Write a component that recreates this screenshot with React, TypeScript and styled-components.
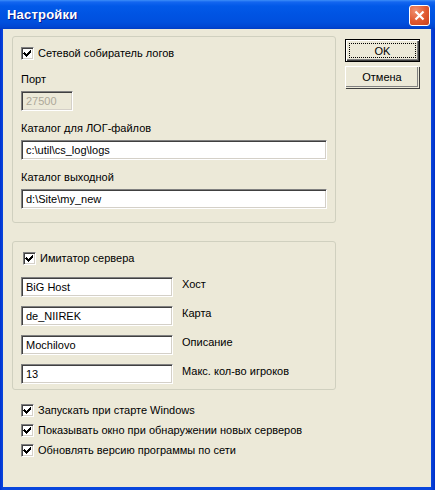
import React from "react";
import styled, { createGlobalStyle } from "styled-components";

const GlobalStyle = createGlobalStyle`
  html, body {
    margin: 0;
    padding: 0;
    background: #fff;
  }
  * {
    box-sizing: border-box;
  }
`;

const Window = styled.div`
  width: 435px;
  height: 490px;
  display: flex;
  flex-direction: column;
  background: linear-gradient(90deg, #0032d0 0, #0846dd 3px, #0846dd 431px, #0030c8 435px);
  font-family: "Liberation Sans", Arial, sans-serif;
  font-size: 11px;
  color: #000;
`;

const TitleBar = styled.div`
  height: 29px;
  flex: none;
  display: flex;
  align-items: center;
  justify-content: space-between;
  padding: 0 5px 0 7px;
  background: linear-gradient(
    180deg,
    #3d8ef8 0,
    #1466f0 2px,
    #0259e8 6px,
    #0054e3 14px,
    #0050de 22px,
    #0046d2 27px,
    #003cc4 29px
  );
`;

const Title = styled.span`
  color: #fff;
  font-weight: bold;
  font-size: 13px;
  letter-spacing: 0.2px;
  text-shadow: 1px 1px 0 #0a1c8c;
`;

const CloseButton = styled.div`
  width: 21px;
  height: 21px;
  border: 1px solid #fff;
  border-radius: 3px;
  background: radial-gradient(circle at 30% 25%, #f09070 0, #e0582f 55%, #c8401c 100%);
  display: flex;
  align-items: center;
  justify-content: center;
  margin-top: 1px;
`;

const Client = styled.div`
  flex: 1;
  margin: 0 4px 3px 3px;
  background: #ece9d8;
  display: flex;
  gap: 9px;
  padding: 7px 0 0 9px;
`;

const LeftColumn = styled.div`
  width: 324px;
  display: flex;
  flex-direction: column;
`;

const GroupBox = styled.div<{ $pad: string; $mt?: number }>`
  border: 1px solid #d0d0bf;
  border-radius: 3px;
  padding: ${(p) => p.$pad};
  margin-top: ${(p) => p.$mt ?? 0}px;
  display: flex;
  flex-direction: column;
`;

const CheckRow = styled.label<{ $mt?: number; $indent?: number }>`
  display: flex;
  align-items: center;
  gap: 4px;
  height: 13px;
  line-height: 13px;
  white-space: nowrap;
  margin-top: ${(p) => p.$mt ?? 0}px;
  padding-left: ${(p) => p.$indent ?? 0}px;
`;

const Box = styled.span`
  width: 13px;
  height: 13px;
  flex: none;
  background: #fff;
  border-style: solid;
  border-width: 1px;
  border-color: #808080 #fff #fff #808080;
  box-shadow: inset 1px 1px 0 #404040, inset -1px -1px 0 #d4d0c8;
  display: flex;
`;

const FieldLabel = styled.div<{ $mt: number }>`
  line-height: 13px;
  height: 13px;
  margin-top: ${(p) => p.$mt}px;
  margin-bottom: 5px;
`;

const Edit = styled.div<{ $width?: number; $disabled?: boolean }>`
  height: 20px;
  width: ${(p) => (p.$width ? `${p.$width}px` : "100%")};
  flex: none;
  background: ${(p) => (p.$disabled ? "#ece9d8" : "#fff")};
  color: ${(p) => (p.$disabled ? "#aca899" : "#000")};
  border-style: solid;
  border-width: 1px;
  border-color: #808080 #fff #fff #808080;
  box-shadow: inset 1px 1px 0 #404040, inset -1px -1px 0 #d4d0c8;
  padding: 0 0 0 4px;
  line-height: 18px;
  white-space: nowrap;
  overflow: hidden;
`;

const ServerRow = styled.div`
  display: flex;
  align-items: flex-start;
  gap: 9px;
  margin-top: 9px;

  &:first-of-type {
    margin-top: 12px;
  }
`;

const ServerLabel = styled.span`
  line-height: 13px;
  padding-top: 1px;
`;

const Options = styled.div`
  display: flex;
  flex-direction: column;
  gap: 7px;
  margin-top: 14px;
  padding-left: 9px;
`;

const ButtonColumn = styled.div`
  display: flex;
  flex-direction: column;
  gap: 4px;
  padding-top: 3px;
`;

const Button = styled.div<{ $default?: boolean }>`
  position: relative;
  width: 75px;
  height: 23px;
  display: flex;
  align-items: center;
  justify-content: center;
  background: #ece9d8;
  border: 1px solid ${(p) => (p.$default ? "#000" : "#fff")};
  box-shadow: ${(p) =>
    p.$default
      ? "inset 1px 1px 0 #fff, inset -1px -1px 0 #404040, inset -2px -2px 0 #808080"
      : "1px 1px 0 #404040, inset -1px -1px 0 #808080"};
  ${(p) => (p.$default ? "" : "border-right-color: #ece9d8; border-bottom-color: #ece9d8; width: 74px; height: 22px;")}
`;

const FocusRing = styled.span`
  position: absolute;
  inset: 3px;
  border: 1px dotted #000;
`;

const Check = () => (
  <svg width="11" height="11" viewBox="0 0 11 11" shapeRendering="crispEdges">
    <path
      d="M2 4h1v1h1v1h1v-1h1v-1h1v-1h1v-1h1v3h-1v1h-1v1h-1v1h-1v1h-1v-1h-1v-1h-1v-1h-1z"
      fill="#000"
    />
  </svg>
);

const CheckBox = ({
  label,
  mt,
  indent,
}: {
  label: string;
  mt?: number;
  indent?: number;
}) => (
  <CheckRow $mt={mt} $indent={indent}>
    <Box>
      <Check />
    </Box>
    <span>{label}</span>
  </CheckRow>
);

const servers = [
  { value: "BiG Host", label: "Хост" },
  { value: "de_NIIREK", label: "Карта" },
  { value: "Mochilovo", label: "Описание" },
  { value: "13", label: "Макс. кол-во игроков" },
];

const options = [
  "Запускать при старте Windows",
  "Показывать окно при обнаружении новых серверов",
  "Обновлять версию программы по сети",
];

export default function App() {
  return (
    <>
      <GlobalStyle />
      <Window>
        <TitleBar>
          <Title>Настройки</Title>
          <CloseButton>
            <svg width="11" height="11" viewBox="0 0 11 11">
              <path d="M1.5 1.5l8 8M9.5 1.5l-8 8" stroke="#fff" strokeWidth="2.2" />
            </svg>
          </CloseButton>
        </TitleBar>
        <Client>
          <LeftColumn>
            <GroupBox $pad="10px 8px 13px 8px">
              <CheckBox label="Сетевой собиратель логов" />
              <FieldLabel $mt={13}>Порт</FieldLabel>
              <Edit $width={52} $disabled>
                27500
              </Edit>
              <FieldLabel $mt={11}>Каталог для ЛОГ-файлов</FieldLabel>
              <Edit $width={306}>c:\util\cs_log\logs</Edit>
              <FieldLabel $mt={11}>Каталог выходной</FieldLabel>
              <Edit $width={306}>d:\Site\my_new</Edit>
            </GroupBox>
            <GroupBox $pad="10px 8px 5px 8px" $mt={18}>
              <CheckBox label="Имитатор сервера" indent={2} />
              {servers.map((s) => (
                <ServerRow key={s.label}>
                  <Edit $width={152}>{s.value}</Edit>
                  <ServerLabel>{s.label}</ServerLabel>
                </ServerRow>
              ))}
            </GroupBox>
            <Options>
              {options.map((o) => (
                <CheckBox key={o} label={o} />
              ))}
            </Options>
          </LeftColumn>
          <ButtonColumn>
            <Button $default>
              <FocusRing />
              OK
            </Button>
            <Button>Отмена</Button>
          </ButtonColumn>
        </Client>
      </Window>
    </>
  );
}
